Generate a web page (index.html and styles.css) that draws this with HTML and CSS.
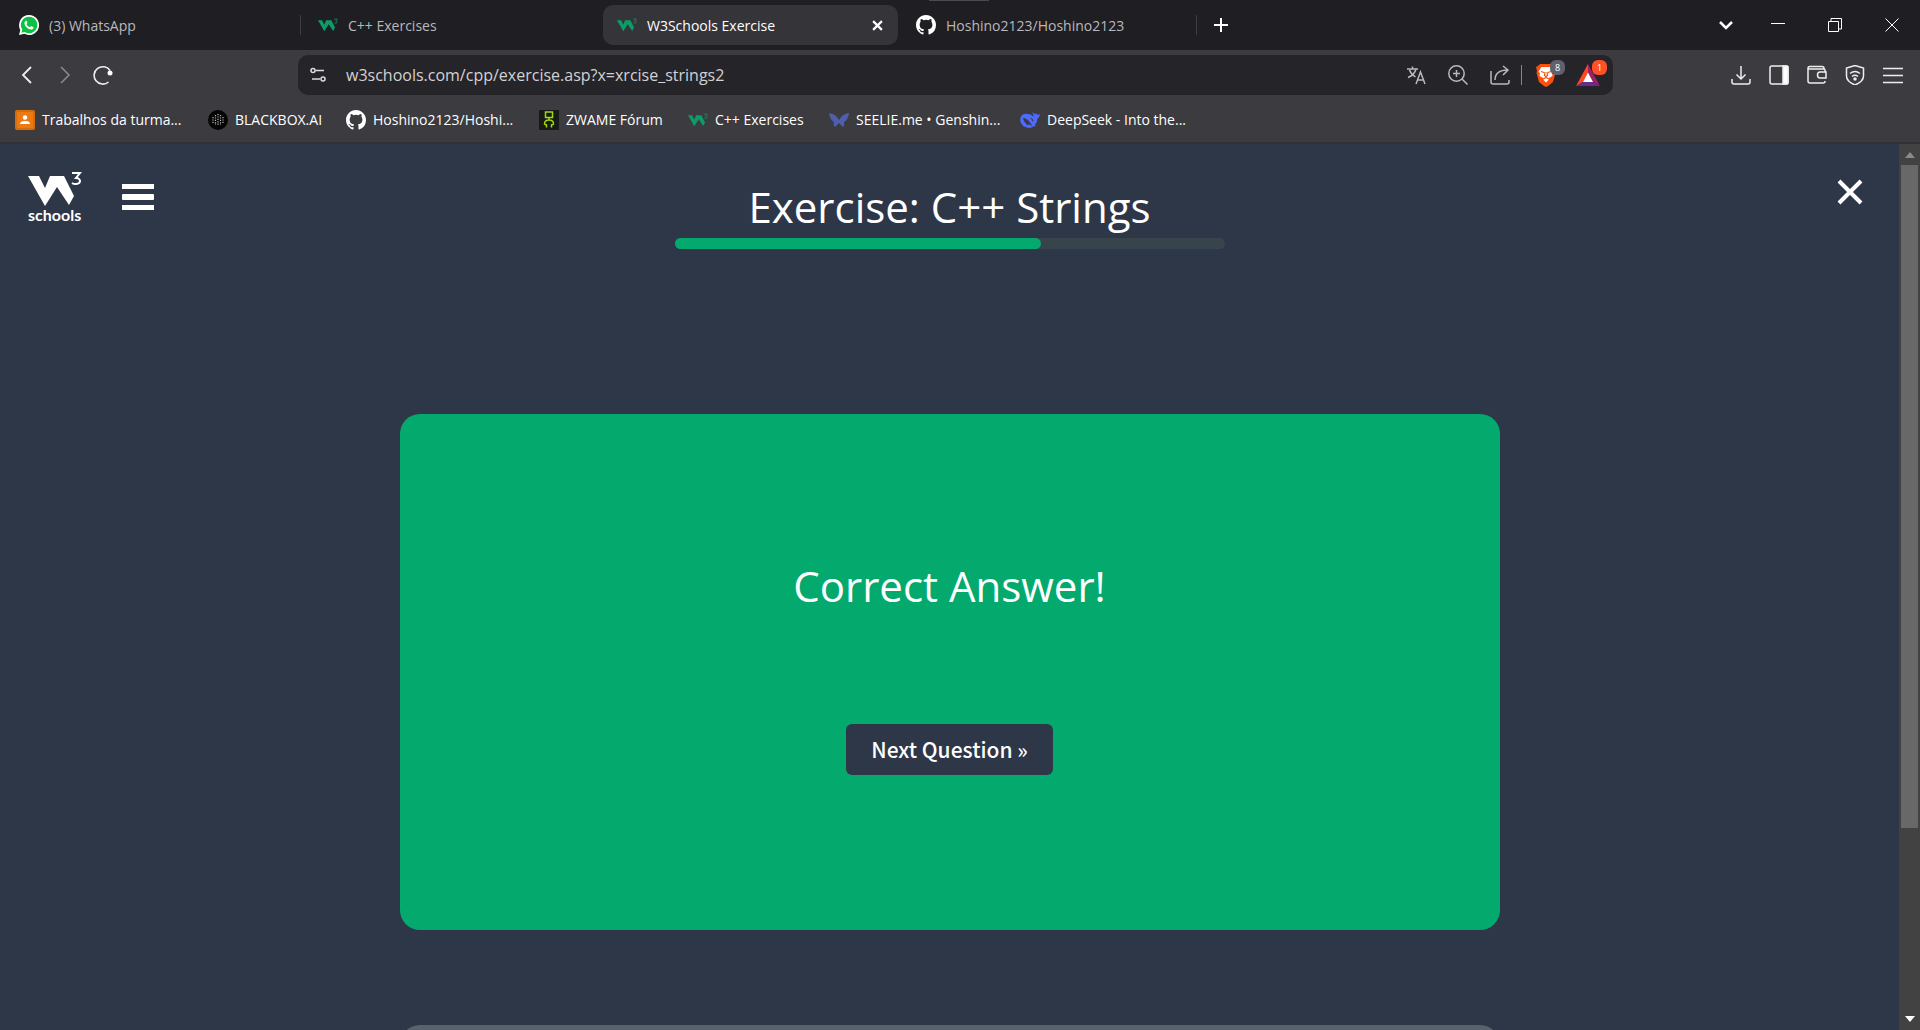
FILE: index.html
```html
<!DOCTYPE html>
<html lang="en">
<head>
<meta charset="utf-8">
<meta name="viewport" content="width=device-width, initial-scale=1">
<title>W3Schools Exercise</title>
<link rel="stylesheet" href="styles.css">
</head>
<body>
<svg class="defs" aria-hidden="true">
  <symbol id="w3" viewBox="0 0 54 34">
    <path d="M0 4h11l6 12 5-12h14l10 20-5 9L29 15 17 34z"/>
    <path d="M44 1h8l-4 5c3 0 4 2 4 3 0 3-5 4-8 2" fill="none" stroke="currentColor" stroke-width="2"/>
  </symbol>
  <symbol id="github" viewBox="0 0 16 16">
    <path d="M8 0C3.58 0 0 3.58 0 8c0 3.54 2.29 6.53 5.47 7.59.4.07.55-.17.55-.38 0-.19-.01-.82-.01-1.49-2.01.37-2.53-.49-2.69-.94-.09-.23-.48-.94-.82-1.13-.28-.15-.68-.52-.01-.53.63-.01 1.08.58 1.23.82.72 1.21 1.87.87 2.33.66.07-.52.28-.87.51-1.07-1.78-.2-3.64-.89-3.64-3.95 0-.87.31-1.59.82-2.15-.08-.2-.36-1.02.08-2.12 0 0 .67-.21 2.2.82a7.6 7.6 0 0 1 4 0c1.53-1.04 2.2-.82 2.2-.82.44 1.1.16 1.92.08 2.12.51.56.82 1.27.82 2.15 0 3.07-1.87 3.75-3.65 3.95.29.25.54.73.54 1.48 0 1.07-.01 1.93-.01 2.2 0 .21.15.46.55.38A8.01 8.01 0 0 0 16 8c0-4.42-3.58-8-8-8z"/>
  </symbol>
</svg>

<header class="browser">
  <div class="tabstrip">
    <span class="grip"></span>
    <nav class="tabs" aria-label="Tabs">
      <a class="tab" href="#">
        <svg class="favicon" viewBox="0 0 20 20"><path fill="#fff" d="M10 0a10 10 0 1 1-4.700 18.800L0 20l1.300-5.100A10 10 0 0 1 10 0z"/><path fill="#0ac143" d="M10 1.700a8.300 8.300 0 1 1-4.400 15.300l-3.200.8.900-3.100A8.300 8.300 0 0 1 10 1.700z"/><path fill="#fff" d="M7.500 5.500 8.400 8l-.9 1.200c.8 1.500 1.900 2.500 3.400 3.100l1.200-1.300 2.500 1.200c0 1.500-1.200 2.400-2.700 2.400-3.800-.7-6-3.300-6.500-6 0-1.500 1-3 2.100-3.100z"/></svg>
        <span class="label">(3) WhatsApp</span>
      </a>
      <a class="tab ruled" href="#">
        <svg class="favicon w3-green"><use href="#w3"/></svg>
        <span class="label">C++ Exercises</span>
      </a>
      <a class="tab active" href="#">
        <svg class="favicon w3-green"><use href="#w3"/></svg>
        <span class="label">W3Schools Exercise</span>
        <svg class="tab-close" viewBox="0 0 10 10"><path d="M1 1l8 8M9 1 1 9"/></svg>
      </a>
      <a class="tab" href="#">
        <svg class="favicon white"><use href="#github"/></svg>
        <span class="label">Hoshino2123/Hoshino2123</span>
      </a>
    </nav>
    <button class="new-tab" aria-label="New tab"><svg width="14" height="14" viewBox="0 0 14 14"><path d="M7 0v14M0 7h14" stroke-width="2"/></svg></button>
    <div class="window-controls">
      <button aria-label="Search tabs"><svg width="14" height="14" viewBox="0 0 14 14"><path d="M1 4l6 6 6-6" stroke-width="2.500"/></svg></button>
      <button aria-label="Minimize"><svg width="14" height="14" viewBox="0 0 14 14"><path d="M0 5.500h14"/></svg></button>
      <button aria-label="Restore"><svg width="14" height="14" viewBox="0 0 14 14"><path d="M.5 3.500h10v10H.5zM3 3V.5h10.500V11H11"/></svg></button>
      <button aria-label="Close"><svg width="14" height="14" viewBox="0 0 14 14"><path d="M.5.5l13 13m0-13-13 13"/></svg></button>
    </div>
  </div>

  <div class="toolbar">
    <div class="tools nav-tools">
      <button aria-label="Back"><svg viewBox="0 0 20 20"><path d="M14 2 6 10l8 8" stroke-width="1.800"/></svg></button>
      <button class="dim" aria-label="Forward"><svg viewBox="0 0 20 20"><path d="M6 2l8 8-8 8" stroke-width="1.500"/></svg></button>
      <button aria-label="Reload"><svg viewBox="0 0 20 20"><path d="M15.500 17A8.700 8.700 0 1 1 17 5.500" stroke-width="1.600"/><circle cx="17" cy="8" r="2.500" fill="#fff" stroke="none"/></svg></button>
    </div>
    <div class="address">
      <svg class="site-info" viewBox="0 0 16 16"><circle cx="3" cy="3.500" r="2"/><path d="M5.500 3.500H14M2 12h8"/><circle cx="13" cy="12" r="2"/></svg>
      <input class="url" type="text" aria-label="Address" value="w3schools.com/cpp/exercise.asp?x=xrcise_strings2">
      <div class="tools page-tools">
        <button aria-label="Translate"><svg viewBox="0 0 20 20"><path d="M1 4h11M6.500 1.500V4M10 4c-1 4-4 7-8 8.500M3.500 5c1 3 3 5 6 7M10 19l4.500-12L19 19M11.500 15h6"/></svg></button>
        <button aria-label="Zoom"><svg viewBox="0 0 20 20"><circle cx="8.500" cy="8.500" r="7.700"/><path d="M14 14l5.500 5.500M8.500 5v7M5 8.500h7"/></svg></button>
        <button aria-label="Share"><svg viewBox="0 0 20 20"><path d="M1 6v11q0 2 2 2h14q2 0 2-2v-2M5 15c0-6 4-10 13-10M13 1l5 4-5 5"/></svg></button>
        <span class="divider"></span>
        <button class="badged" aria-label="Shields"><svg viewBox="0 0 20 24"><path fill="#fb4f0c" stroke="none" d="M4 1h12l2 2 2 1-1 4 .5 2-2.500 9-5 4-2 1-2-1-5-4L.5 10 1 8 0 4l2-1z"/><path fill="#fff" stroke="none" d="M5.500 4h9l3 4.500-1.500 2 .5 2.500-3.500 2-.5 2L10 19.500 7.500 17 7 15l-3.500-2 .5-2.500-1.500-2z"/><path stroke="#fb4f0c" stroke-width="1.200" d="M5 8.500l3 1m7-1-3 1m-3-.5-.5 3.500 1.500 1 1.500-1L11 9m-4 7 3-1.500 3 1.500"/></svg><span class="badge grey">8</span></button>
        <button class="badged" aria-label="Rewards"><svg class="wide" viewBox="0 0 24 22"><path fill="#ff4724" stroke="none" d="M12 0v9l-5 9-7 4z"/><path fill="#9e1f63" stroke="none" d="M12 0l12 22-7-4-5-9z"/><path fill="#662d91" stroke="none" d="M0 22l7-4h10l7 4z"/><path fill="#fff" stroke="none" d="M12 8.500 17 18H7z"/></svg><span class="badge orange">1</span></button>
      </div>
    </div>
    <div class="tools app-tools">
      <button aria-label="Downloads"><svg viewBox="0 0 20 20"><path d="M10 1v13M5.500 9.500 10 14l4.500-4.500M1 14v3q0 2 2 2h14q2 0 2-2v-3"/></svg></button>
      <button aria-label="Sidebar"><svg viewBox="0 0 20 20"><rect x="1" y="1" width="18" height="18" rx="2"/><path d="M14 1h4q1 0 1 1v16q0 1-1 1h-4z" fill="#fff"/></svg></button>
      <button aria-label="Wallet"><svg viewBox="0 0 20 20"><path d="M18 7V5q0-1-1-1H2.500Q1 4 1 2.700 1 1.500 3 1.500h12q2 0 2 2M1 3v13q0 2 2 2h13q2 0 2-2M19 7h-6q-2.500 0-2.500 3t2.500 3h6z"/></svg></button>
      <button aria-label="VPN"><svg viewBox="0 0 20 20"><path d="M10 .5 18.500 3v8c0 5-5 7.500-8.500 9-3.500-1.500-8.500-4-8.500-9V3zM5 8.500q5-4 10 0M7 11.500q3-2.500 6 0"/><circle cx="10" cy="14" r="1" fill="#fff"/></svg></button>
      <button aria-label="Menu"><svg viewBox="0 0 20 20"><path d="M0 3.500h20M0 10.500h20M0 17.500h20"/></svg></button>
    </div>
  </div>

  <nav class="bookmarks" aria-label="Bookmarks">
    <a href="#"><svg class="favicon" viewBox="0 0 20 20"><rect width="20" height="20" rx="2" fill="#d56b0b"/><rect x="2" y="2" width="16" height="16" fill="#ec7a13"/><circle cx="10" cy="7.500" r="2.200" fill="#fff"/><path d="M5 14q0-3 5-3t5 3z" fill="#fff"/></svg><span>Trabalhos da turma...</span></a>
    <a href="#"><svg class="favicon" viewBox="0 0 20 20"><circle cx="10" cy="10" r="10" fill="#050505"/><path d="M10 4v12M7.500 5v10M12.500 5v10M5 7v6M15 7v6" stroke="#bbb" stroke-width="1.200" stroke-dasharray="1.200 1.200"/></svg><span>BLACKBOX.AI</span></a>
    <a href="#"><svg class="favicon white"><use href="#github"/></svg><span>Hoshino2123/Hoshi...</span></a>
    <a href="#"><svg class="favicon" viewBox="0 0 20 20"><rect width="20" height="20" fill="#181a18"/><path d="M6.500 2h7v5.500h-7zM10 7.500V10M7.500 17.500V15L5.500 14q0-4 4.500-4t4.500 4l-2 1v2.500" fill="none" stroke="#a4d80f" stroke-width="1.500"/></svg><span>ZWAME Fórum</span></a>
    <a href="#"><svg class="favicon w3-green"><use href="#w3"/></svg><span>C++ Exercises</span></a>
    <a href="#"><svg class="favicon" viewBox="0 0 20 20"><path fill="#4f5fae" d="M0 3q7 1 10 7 3-6 10-7-1 7-5 9 1 3-1 5l-4-4-4 4q-2-1-1-5-4-2-5-9z"/></svg><span>SEELIE.me • Genshin...</span></a>
    <a href="#"><svg class="favicon" viewBox="0 0 20 20"><path fill="#4d6bfe" d="M19.700 4q-1.500 1-2.700.5-1-1.500-2-.5-2-1-2.500-2 0 3 2 4.500-2 0-4-2Q4 2.500 1.500 5.500-2 12 4 16.500q6 3 10-.5l1.500.5-.5-2q2.500-3 2.500-6Q20 7 19.700 4z"/><path fill="#3c3b40" d="M3 8q4 0 7 4.500l2 2.500-1 .5-2-1.500-1 1.500Q4 13 3 8zM10 8q3 0 3.500 3l-1 .5Q12 9 10 8z"/></svg><span>DeepSeek - Into the...</span></a>
  </nav>
</header>

<div class="viewport">
  <main class="page">
    <div class="topbar">
      <div class="brand">
        <a class="logo" href="#" aria-label="W3Schools home"><svg width="54" height="34"><use href="#w3"/></svg><span>schools</span></a>
        <button class="menu" aria-label="Open menu"><i></i><i></i><i></i></button>
      </div>
      <div class="heading">
        <h1>Exercise: C++ Strings</h1>
        <div class="progress" role="progressbar" aria-label="Progress"><div class="bar" style="width:66.6%"></div></div>
      </div>
      <button class="close" aria-label="Close exercise"><svg width="26" height="28" viewBox="0 0 26 28"><path d="M2 3l22 22M24 3 2 25"/></svg></button>
    </div>
    <section class="card result">
      <h2>Correct Answer!</h2>
      <button class="next">Next Question »</button>
    </section>
    <section class="card following"></section>
  </main>
  <div class="scrollbar">
    <svg width="10" height="6" viewBox="0 0 10 6"><path fill="#8a8a8a" d="M5 0l5 6H0z"/></svg>
    <div class="track"><div class="thumb"></div></div>
    <svg width="10" height="6" viewBox="0 0 10 6"><path fill="#fff" d="M0 0h10L5 6z"/></svg>
  </div>
</div>
</body>
</html>
```
FILE: styles.css
```css
* { box-sizing: border-box; }

body {
  margin: 0;
  height: 100vh;
  display: flex;
  flex-direction: column;
  overflow: hidden;
  font-family: "Open Sans", "Noto Sans", sans-serif;
  color: #fff;
  background: #2e3748;
}

a { color: inherit; text-decoration: none; }

button {
  display: flex;
  align-items: center;
  justify-content: center;
  padding: 0;
  border: 0;
  background: none;
  color: inherit;
  font: inherit;
}

.defs { position: absolute; width: 0; height: 0; }
.favicon { width: 20px; height: 20px; flex: none; }
.white { fill: #fff; }
.w3-green { color: #0b9d68; fill: #0b9d68; }

/* Browser window */
.browser {
  flex: none;
  background: #3c3b40;
  border-bottom: 2px solid #323136;
  font-size: 14px;
}

.tabstrip {
  position: relative;
  display: flex;
  align-items: center;
  height: 50px;
  padding-left: 5px;
  background: #1f1e23;
}
.grip {
  position: absolute;
  top: 0;
  left: calc(50% - 31px);
  width: 60px;
  height: 1px;
  background: #4b4b4b;
}
.tabs { display: flex; gap: 4px; }
.tab {
  position: relative;
  display: flex;
  align-items: center;
  gap: 10px;
  width: 295px;
  height: 40px;
  padding: 0 15px 0 14px;
  border-radius: 10px;
  color: #b9b9bb;
}
.tab.active { color: #fff; background: #353439; }
.tab .label { flex: 1; white-space: nowrap; }
.tab-close { width: 11px; height: 11px; stroke: #fff; stroke-width: 2; }
.ruled::before, .tab:last-child::after {
  content: "";
  position: absolute;
  left: -4px;
  width: 1px;
  height: 20px;
  background: #3e3d42;
}
.tab:last-child::after { left: auto; right: 0; }
.new-tab { width: 48px; height: 40px; }
.new-tab svg, .window-controls svg { fill: none; stroke: #fff; }
.window-controls { display: flex; margin-left: auto; }
.window-controls button { width: 57px; height: 50px; }
.window-controls button:first-child { width: 46px; }

.toolbar {
  display: grid;
  grid-template-columns: 290px minmax(0, 1fr) 299px;
  padding: 5px 8px 2px;
}
.tools { display: flex; align-items: center; }
.tools button { width: 38px; height: 40px; }
.tools svg { width: 20px; height: 20px; fill: none; stroke: #eee; stroke-width: 1.5; }
.dim { opacity: .45; }
.app-tools { justify-content: flex-end; }

.address {
  display: flex;
  align-items: center;
  height: 40px;
  padding: 0 4px 0 12px;
  border-radius: 10px;
  background: #252429;
}
.site-info { width: 16px; height: 16px; fill: none; stroke: #ddd; stroke-width: 1.5; }
.url {
  flex: 1;
  min-width: 0;
  height: 40px;
  padding: 0 0 0 20px;
  border: 0;
  outline: 0;
  background: none;
  color: #d2d2d4;
  font: inherit;
  font-size: 16px;
}
.page-tools button { width: 42px; }
.page-tools svg { stroke: #b9b9bc; }
.divider { width: 1px; height: 20px; margin-right: 3px; background: #85858a; }
.tools .badged { position: relative; }
.badged svg { height: 24px; }
.tools .badged .wide { width: 24px; height: 22px; }
.badge {
  position: absolute;
  top: 5px;
  right: 2px;
  width: 15px;
  height: 15px;
  border-radius: 6px;
  font-size: 9px;
  line-height: 15px;
  text-align: center;
}
.grey { background: #5f6170; }
.orange { background: #ff5029; }

.bookmarks {
  display: grid;
  grid-template-columns: 193px 138px 193px 149px 141px 191px 180px;
  height: 45px;
  padding-left: 15px;
}
.bookmarks a {
  display: flex;
  align-items: center;
  gap: 7px;
  white-space: nowrap;
}

/* Page content */
.viewport { flex: 1; min-height: 0; display: flex; }
.page { flex: 1; overflow: hidden; }

.topbar {
  display: grid;
  grid-template-columns: 1fr 550px 1fr;
  align-items: start;
  height: 270px;
  padding: 28px 28px 0;
}
.brand { display: flex; gap: 40px; }
.logo { display: flex; flex-direction: column; width: 54px; fill: #fff; }
.logo span {
  font-family: Lato, sans-serif;
  font-size: 16px;
  font-weight: 700;
  line-height: 18px;
}
.menu {
  flex-direction: column;
  gap: 5px;
  margin-top: 12px;
  height: 26px;
}
.menu i { width: 32px; height: 5px; background: #fff; }
.menu i:nth-child(2) { height: 6px; border-radius: 1px; }
h1, h2 {
  margin: 0;
  font-size: 42px;
  font-weight: 400;
  line-height: 60px;
  text-align: center;
  white-space: nowrap;
}
.heading { padding-top: 5px; }
.progress { height: 11px; margin-top: 1px; border-radius: 6px; background: #38444c; }
.bar { height: 11px; border-radius: 6px; background: #04aa6d; }
.close { justify-self: end; margin: 6px 8px 0 0; }
.close svg { stroke: #fff; stroke-width: 4; }

.card { width: 1100px; max-width: 90%; margin: 0 auto; border-radius: 20px; }
.result {
  display: flex;
  flex-direction: column;
  align-items: center;
  padding: 142px 0 155px;
  background: #04aa6d;
}
.next {
  margin-top: 108px;
  height: 51px;
  padding: 0 25px 2px;
  border-radius: 6px;
  background: #2e3748;
  font-family: "Noto Sans CJK SC", sans-serif;
  font-size: 21px;
  font-weight: 500;
}
.following { height: 200px; margin-top: 95px; background: #58616e; }

.scrollbar {
  display: flex;
  flex-direction: column;
  align-items: center;
  gap: 7px;
  width: 21px;
  padding: 8px 0;
  background: #424242;
}
.scrollbar svg { flex: none; }
.track { flex: 1; width: 17px; }
.thumb { height: 78.6%; background: #686868; }
```
